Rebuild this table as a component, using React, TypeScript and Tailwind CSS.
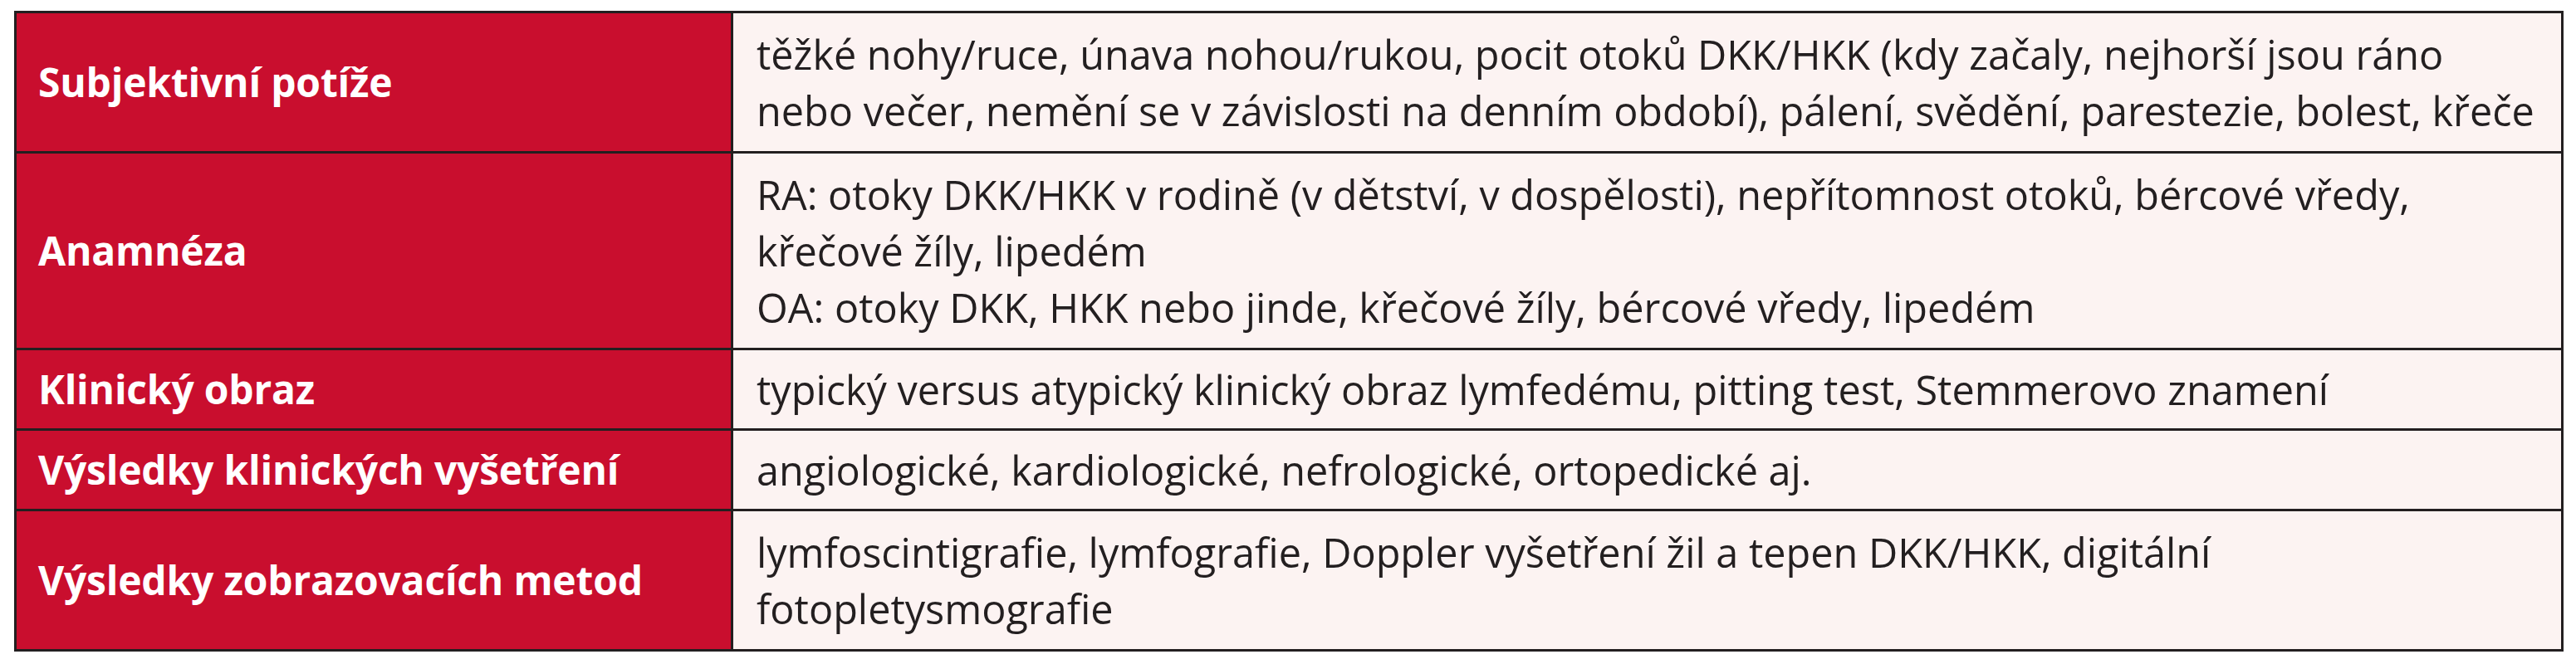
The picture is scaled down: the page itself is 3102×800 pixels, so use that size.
type Row = { label: string; lines: string[]; single?: boolean }

const rows: Row[] = [
  {
    label: "Subjektivní potíže",
    lines: [
      "těžké nohy/ruce, únava nohou/rukou, pocit otoků DKK/HKK (kdy začaly, nejhorší jsou ráno nebo večer, nemění se v závislosti na denním období), pálení, svědění, parestezie, bolest, křeče",
    ],
  },
  {
    label: "Anamnéza",
    lines: [
      "RA: otoky DKK/HKK v rodině (v dětství, v dospělosti), nepřítomnost otoků, bércové vředy, křečové žíly, lipedém",
      "OA: otoky DKK, HKK nebo jinde, křečové žíly, bércové vředy, lipedém",
    ],
  },
  {
    label: "Klinický obraz",
    lines: ["typický versus atypický klinický obraz lymfedému, pitting test, Stemmerovo znamení"],
    single: true,
  },
  {
    label: "Výsledky klinických vyšetření",
    lines: ["angiologické, kardiologické, nefrologické, ortopedické aj."],
    single: true,
  },
  {
    label: "Výsledky zobrazovacích metod",
    lines: [
      "lymfoscintigrafie, lymfografie, Doppler vyšetření žil a tepen DKK/HKK, digitální fotopletysmografie",
    ],
  },
]

export default function App() {
  return (
    <div className="min-h-screen bg-white pl-[17px] pt-[13px] font-['Open_Sans',sans-serif]">
      <table className="w-[3070px] table-fixed border-collapse border-[3px] border-[#231f20]">
        <colgroup>
          <col className="w-[863px]" />
          <col />
        </colgroup>
        <tbody>
          {rows.map((row) => (
            <tr key={row.label}>
              <th
                scope="row"
                className={
                  row.single
                    ? "border-[3px] border-[#231f20] bg-[#c90e2e] py-[13px] pl-[26px] pr-4 text-left align-middle text-[48px] font-bold leading-[68px] tracking-[-0.2px] text-white"
                    : "border-[3px] border-[#231f20] bg-[#c90e2e] py-[15px] pl-[26px] pr-4 text-left align-middle text-[48px] font-bold leading-[68px] tracking-[-0.2px] text-white"
                }
              >
                {row.label}
              </th>
              <td
                className={
                  row.single
                    ? "border-[3px] border-[#231f20] bg-[#fcf3f2] py-[13px] pl-[28px] pr-[18px] align-top text-[48.6px] leading-[68px] text-[#231f20]"
                    : "border-[3px] border-[#231f20] bg-[#fcf3f2] py-[15px] pl-[28px] pr-[18px] align-top text-[48.6px] leading-[68px] text-[#231f20]"
                }
              >
                {row.lines.map((line) => (
                  <p key={line}>{line}</p>
                ))}
              </td>
            </tr>
          ))}
        </tbody>
      </table>
    </div>
  )
}
